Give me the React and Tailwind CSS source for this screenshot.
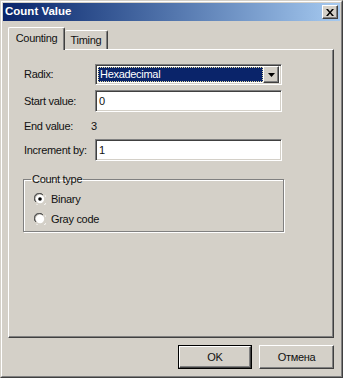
import { useState } from "react";

// Классический диалог Windows: "Count Value"
const sunken =
  "border border-t-[#808080] border-l-[#808080] border-r-white border-b-white shadow-[inset_1px_1px_0_#404040,inset_-1px_-1px_0_#d4d0c8]";
const raised =
  "border border-t-white border-l-white border-r-[#404040] border-b-[#404040] shadow-[inset_-1px_-1px_0_#808080]";

function Radio({ checked, label, onClick }) {
  return (
    <div className="flex items-center gap-[5px] h-[16px]" onClick={onClick}>
      <svg width="12" height="12" viewBox="0 0 12 12">
        <path d="M1 8 A5 5 0 0 1 8 1" stroke="#808080" fill="none" />
        <path d="M2 9 A4.5 4.5 0 0 1 9 2" stroke="#404040" fill="none" />
        <circle cx="6" cy="6" r="4.2" fill="#fff" />
        <path d="M3.5 10.5 A5 5 0 0 0 10.5 3.5" stroke="#d4d0c8" fill="none" />
        <path d="M2.5 11.3 A5.6 5.6 0 0 0 11.3 2.5" stroke="#fff" fill="none" />
        {checked && <circle cx="6" cy="6" r="1.8" fill="#000" />}
      </svg>
      <span>{label}</span>
    </div>
  );
}

export default function App() {
  const [tab, setTab] = useState("counting");
  const [binary, setBinary] = useState(true);

  return (
    <div className="w-[343px] h-[378px] bg-[#d4d0c8] border border-t-[#d4d0c8] border-l-[#d4d0c8] border-r-[#404040] border-b-[#404040] font-['Liberation_Sans',Arial,sans-serif] text-[11px] tracking-[-0.3px] text-[#111] overflow-hidden">
      <div className="h-full border border-t-white border-l-white border-r-[#808080] border-b-[#808080] p-px flex flex-col">
        {/* заголовок */}
        <div className="h-[18px] flex items-center justify-between bg-linear-to-r from-[#0a246a] to-[#a6caf0] pl-[2px] pr-[2px]">
          <span className="text-white font-bold text-[11.5px] tracking-normal">Count Value</span>
          <div className={`w-[16px] h-[14px] bg-[#d4d0c8] flex items-center justify-center ${raised}`}>
            <svg width="8" height="7" viewBox="0 0 8 7">
              <path d="M0 0h2l2 2.5L6 0h2L5 3.5 8 7H6L4 4.5 2 7H0l3-3.5z" fill="#000" />
            </svg>
          </div>
        </div>

        {/* тело */}
        <div className="flex-1 pl-[5px] pr-[6px] pt-[6px] flex flex-col">
          <div className="flex items-end">
            <div
              onClick={() => setTab("counting")}
              className="relative z-10 -mb-px h-[23px] w-[57px] bg-[#d4d0c8] border-t border-l border-t-white border-l-white border-r border-r-[#404040] shadow-[inset_-1px_0_0_#808080] rounded-t-[2px] flex items-center justify-center pb-[2px]"
            >
              Counting
            </div>
            <div
              onClick={() => setTab("timing")}
              className="h-[19px] w-[43px] border-t border-t-white border-r border-r-[#404040] shadow-[inset_-1px_0_0_#808080] rounded-t-[2px] flex items-center justify-center"
            >
              Timing
            </div>
          </div>

          <div className={`h-[289px] ${raised} pl-[15px] pt-[14px]`}>
            <div className="flex items-center h-[21px]">
              <span className="w-[71px]">Radix:</span>
              <div className={`w-[187px] h-[21px] bg-white flex items-center p-[2px] ${sunken}`}>
                <div className="flex-1 h-[15px] bg-[#0a246a] text-white flex items-center pl-[2px] outline-dotted outline-1 outline-[#e0d8a0] -outline-offset-1">
                  Hexadecimal
                </div>
                <div className={`w-[16px] h-[17px] bg-[#d4d0c8] flex items-center justify-center ${raised}`}>
                  <svg width="7" height="4" viewBox="0 0 7 4">
                    <path d="M0 0h7L3.5 4z" fill="#000" />
                  </svg>
                </div>
              </div>
            </div>

            <div className="flex items-center h-[22px] mt-[5px]">
              <span className="w-[71px]">Start value:</span>
              <div className={`w-[187px] h-[22px] bg-white flex items-center pl-[3px] ${sunken}`}>0</div>
            </div>

            <div className="flex items-center h-[21px] mt-[4px]">
              <span className="w-[67px]">End value:</span>
              <span>3</span>
            </div>

            <div className="flex items-center h-[22px] mt-[2px]">
              <span className="w-[71px]">Increment by:</span>
              <div className={`w-[187px] h-[22px] bg-white flex items-center pl-[3px] ${sunken}`}>1</div>
            </div>

            <fieldset className="-ml-px mt-[12px] w-[261px] h-[59px] border border-[#808080] shadow-[inset_1px_1px_0_#fff,1px_1px_0_#fff] pl-[10px] pt-[5px] flex flex-col gap-[4px]">
              <legend className="-ml-[3px] px-px leading-[13px]">Count type</legend>
              <Radio checked={binary} label="Binary" onClick={() => setBinary(true)} />
              <Radio checked={!binary} label="Gray code" onClick={() => setBinary(false)} />
            </fieldset>
          </div>

          <div className="flex justify-end gap-[7px] mt-[7px]">
            <div className="w-[74px] h-[24px] border border-black">
              <div className={`h-full bg-[#d4d0c8] flex items-center justify-center ${raised}`}>OK</div>
            </div>
            <div className={`w-[75px] h-[24px] bg-[#d4d0c8] flex items-center justify-center ${raised}`}>Отмена</div>
          </div>
        </div>
      </div>
    </div>
  );
}
